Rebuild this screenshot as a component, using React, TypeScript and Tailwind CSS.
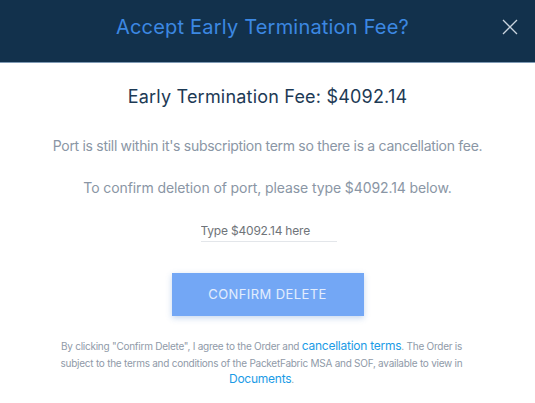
import React from 'react';

const font = { fontFamily: 'Inter, "Noto Sans", sans-serif' };

const App: React.FC = () => {
  return (
    <div className="w-[535px] h-[403px] bg-white overflow-hidden" style={font}>
      {/* Header */}
      <div className="relative h-[63px] bg-[#12314c] border-b border-[#7f9ab4] flex items-center justify-center">
        <h1 className="text-[20px] text-[#3c88e2] tracking-[0.2px] -mt-[9px] -ml-[10px]">Accept Early Termination Fee?</h1>
        <button className="absolute right-[17px] top-[19px] w-[16px] h-[16px] text-[#c9d3dd]">
          <svg viewBox="0 0 16 16" className="w-full h-full" fill="none" stroke="currentColor" strokeWidth="1.3">
            <path d="M1 1 L15 15 M15 1 L1 15" />
          </svg>
        </button>
      </div>

      {/* Body */}
      <div className="flex flex-col items-center pt-[22px]">
        <h2 className="text-[18px] leading-[24px] tracking-[0.2px] text-[#1d3a55]">Early Termination Fee: $4092.14</h2>
        <p className="mt-[27px] text-[14px] leading-[20px] tracking-[-0.3px] text-[#8a96a5]">
          Port is still within it's subscription term so there is a cancellation fee.
        </p>
        <p className="mt-[22px] text-[14px] leading-[20px] tracking-[-0.1px] text-[#8a96a5]">
          To confirm deletion of port, please type $4092.14 below.
        </p>
        <div className="mt-[19px] w-[136px] ml-[2px] border-b border-[#e3e6ea]">
          <input
            className="w-full h-[20px] text-[12px] tracking-[-0.2px] outline-none placeholder:text-[#6f7479] text-[#333] bg-transparent"
            placeholder="Type $4092.14 here"
          />
        </div>
        <button className="mt-[31px] w-[192px] h-[43px] bg-[#73a7f5] text-[13px] tracking-[0.4px] text-white/80 shadow-[0_2px_6px_rgba(60,120,200,0.3)]">
          CONFIRM DELETE
        </button>
        <p className="mt-[22px] mr-[12px] text-center text-[10px] leading-[16.5px] tracking-[-0.25px] text-[#8f9aa8]">
          By clicking "Confirm Delete", I agree to the Order and{' '}
          <a className="text-[12px] leading-none text-[#1b9be6]">cancellation terms</a>. The Order is
          <br />
          subject to the terms and conditions of the PacketFabric MSA and SOF, available to view in
          <br />
          <a className="text-[12px] leading-none text-[#1b9be6]">Documents</a>.
        </p>
      </div>
    </div>
  );
};

export default App;
